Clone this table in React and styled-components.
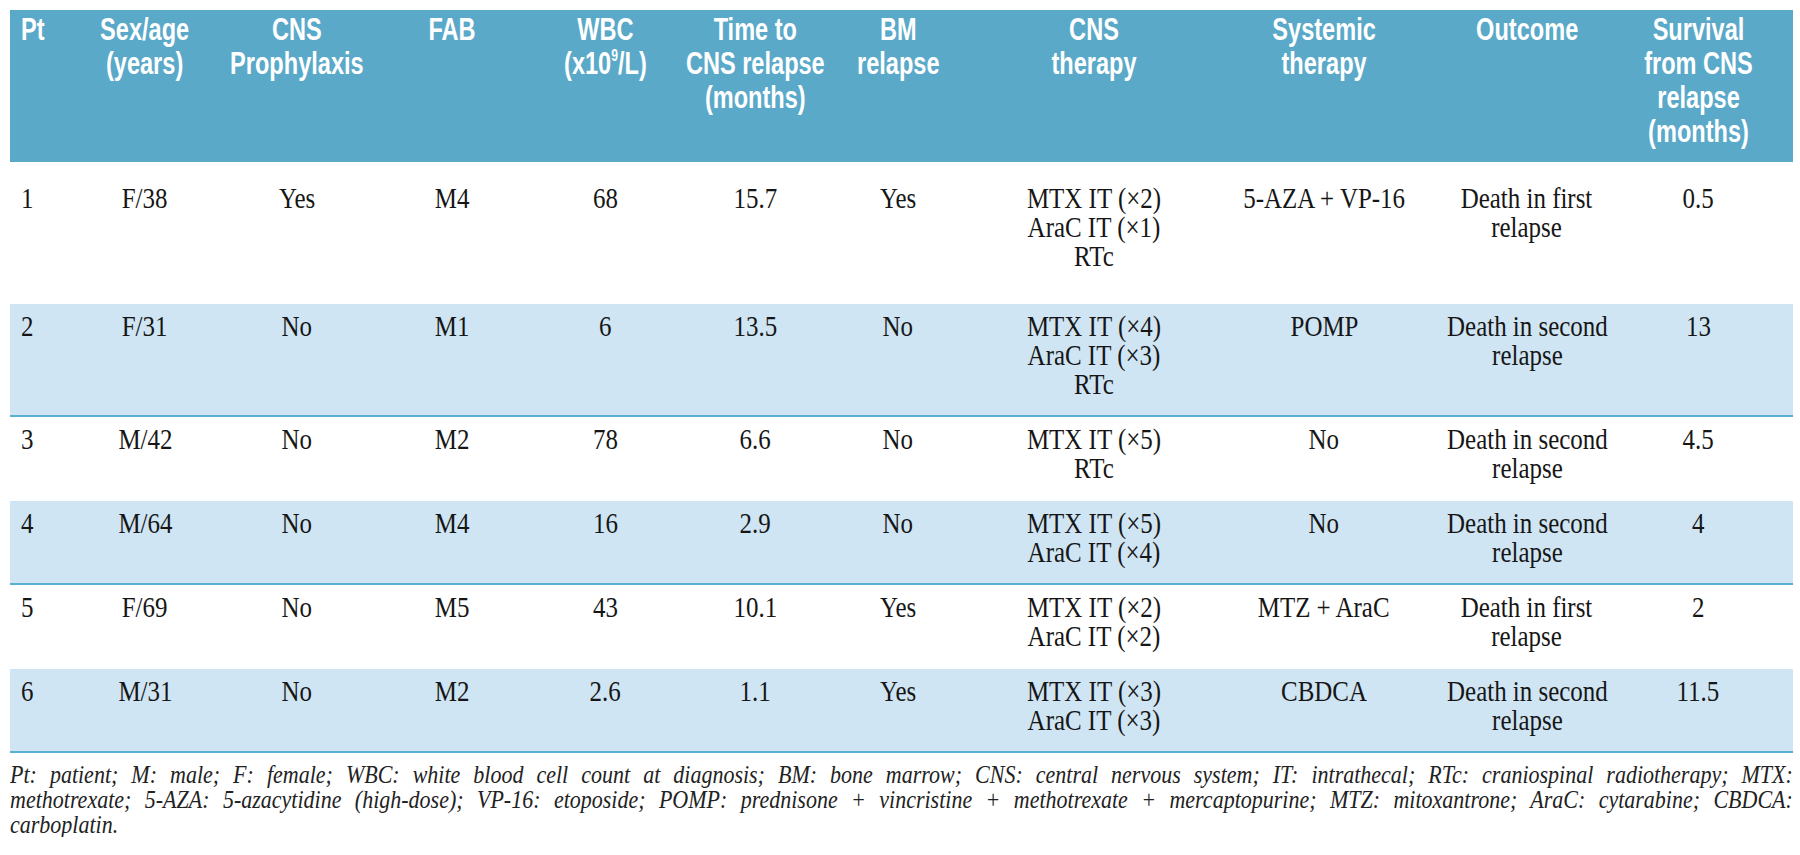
import React from 'react';
import styled, { createGlobalStyle } from 'styled-components';

const GlobalStyle = createGlobalStyle`
  html, body {
    overflow: hidden;
  }
  body {
    margin: 0;
    padding: 10px 0 0 10px;
    background: #fff;
  }
`;

const COLUMNS = '65px 140px 164px 146px 160px 140px 146px 246px 214px 192px 170px';

const Wrapper = styled.div`
  width: 1783px;
`;

const HeaderRow = styled.div`
  display: grid;
  grid-template-columns: ${COLUMNS};
  height: 152px;
  box-sizing: border-box;
  padding-top: 3px;
  background: #5aa9c9;
  color: #fff;
  font-family: "Liberation Sans", Arial, sans-serif;
  font-weight: 700;
  font-size: 31px;
  line-height: 34px;
`;

const HeadCell = styled.div`
  display: flex;
  justify-content: ${(p) => (p.$left ? 'flex-start' : 'center')};
  padding-left: ${(p) => (p.$left ? '11px' : '0')};
  padding-right: ${(p) => (p.$last ? '20px' : '0')};
  white-space: nowrap;
`;

const HeadText = styled.span`
  display: inline-block;
  flex: none;
  text-align: center;
  transform: scaleX(0.76);
  transform-origin: ${(p) => (p.$left ? 'left top' : 'center top')};

  sup {
    font-size: 16px;
    line-height: 0;
    vertical-align: 13px;
  }
`;

const Row = styled.div`
  display: grid;
  grid-template-columns: ${COLUMNS};
  padding-top: ${(p) => (p.$first ? '22px' : '8px')};
  padding-bottom: ${(p) => (p.$first ? '33px' : p.$shade ? '16px' : '18px')};
  background: ${(p) => (p.$shade ? '#cfe5f3' : '#fff')};
  border-bottom: ${(p) => (p.$shade ? '2px solid #5bafd0' : 'none')};
  color: #161616;
  font-family: "Liberation Serif", "Times New Roman", serif;
  font-size: 29px;
  line-height: 29px;
`;

const Cell = styled.div`
  display: flex;
  justify-content: ${(p) => (p.$left ? 'flex-start' : 'center')};
  padding-left: ${(p) => (p.$left ? '11px' : '0')};
  padding-right: ${(p) => (p.$last ? '20px' : '0')};
  white-space: nowrap;
`;

const CellText = styled.span`
  display: inline-block;
  flex: none;
  text-align: center;
  transform: scaleX(0.86);
  transform-origin: ${(p) => (p.$left ? 'left top' : 'center top')};
`;

const Footnote = styled.div`
  margin-top: 9px;
  overflow: hidden;
  font-family: "Liberation Serif", "Times New Roman", serif;
  font-style: italic;
  font-size: 25px;
  line-height: 25px;
  color: #222;
`;

const FootLine = styled.div`
  width: 2026px;
  white-space: nowrap;
  transform: scaleX(0.88);
  transform-origin: left top;
  text-align: ${(p) => (p.$justify ? 'justify' : 'left')};
  text-align-last: ${(p) => (p.$justify ? 'justify' : 'left')};
`;

const headers = [
  ['Pt'],
  ['Sex/age', '(years)'],
  ['CNS', 'Prophylaxis'],
  ['FAB'],
  ['WBC', 'wbc-unit'],
  ['Time to', 'CNS relapse', '(months)'],
  ['BM', 'relapse'],
  ['CNS', 'therapy'],
  ['Systemic', 'therapy'],
  ['Outcome'],
  ['Survival', 'from CNS', 'relapse', '(months)'],
];

const rows = [
  ['1', 'F/38', 'Yes', 'M4', '68', '15.7', 'Yes', ['MTX IT (×2)', 'AraC IT (×1)', 'RTc'], '5-AZA + VP-16', ['Death in first', 'relapse'], '0.5'],
  ['2', 'F/31', 'No', 'M1', '6', '13.5', 'No', ['MTX IT (×4)', 'AraC IT (×3)', 'RTc'], 'POMP', ['Death in second', 'relapse'], '13'],
  ['3', 'M/42', 'No', 'M2', '78', '6.6', 'No', ['MTX IT (×5)', 'RTc'], 'No', ['Death in second', 'relapse'], '4.5'],
  ['4', 'M/64', 'No', 'M4', '16', '2.9', 'No', ['MTX IT (×5)', 'AraC IT (×4)'], 'No', ['Death in second', 'relapse'], '4'],
  ['5', 'F/69', 'No', 'M5', '43', '10.1', 'Yes', ['MTX IT (×2)', 'AraC IT (×2)'], 'MTZ + AraC', ['Death in first', 'relapse'], '2'],
  ['6', 'M/31', 'No', 'M2', '2.6', '1.1', 'Yes', ['MTX IT (×3)', 'AraC IT (×3)'], 'CBDCA', ['Death in second', 'relapse'], '11.5'],
];

const Lines = ({ value }) => {
  const list = Array.isArray(value) ? value : [value];
  return list.map((line, i) => (
    <React.Fragment key={i}>
      {line === 'wbc-unit' ? (
        <>
          (x10<sup>9</sup>/L)
        </>
      ) : (
        line
      )}
      {i < list.length - 1 && <br />}
    </React.Fragment>
  ));
};

const App = () => {
  return (
    <Wrapper>
      <GlobalStyle />
      <HeaderRow>
        {headers.map((h, i) => (
          <HeadCell key={i} $left={i === 0} $last={i === headers.length - 1}>
            <HeadText $left={i === 0}>
              <Lines value={h} />
            </HeadText>
          </HeadCell>
        ))}
      </HeaderRow>
      {rows.map((r, ri) => (
        <Row key={ri} $first={ri === 0} $shade={ri % 2 === 1}>
          {r.map((c, ci) => (
            <Cell key={ci} $left={ci === 0} $last={ci === r.length - 1}>
              <CellText $left={ci === 0}>
                <Lines value={c} />
              </CellText>
            </Cell>
          ))}
        </Row>
      ))}
      <Footnote>
        <FootLine $justify>
          Pt: patient; M: male; F: female; WBC: white blood cell count at diagnosis; BM: bone marrow; CNS: central nervous system; IT: intrathecal; RTc: craniospinal radiotherapy; MTX:
        </FootLine>
        <FootLine $justify>
          methotrexate; 5-AZA: 5-azacytidine (high-dose); VP-16: etoposide; POMP: prednisone + vincristine + methotrexate + mercaptopurine; MTZ: mitoxantrone; AraC: cytarabine; CBDCA:
        </FootLine>
        <FootLine>carboplatin.</FootLine>
      </Footnote>
    </Wrapper>
  );
};

export default App;
